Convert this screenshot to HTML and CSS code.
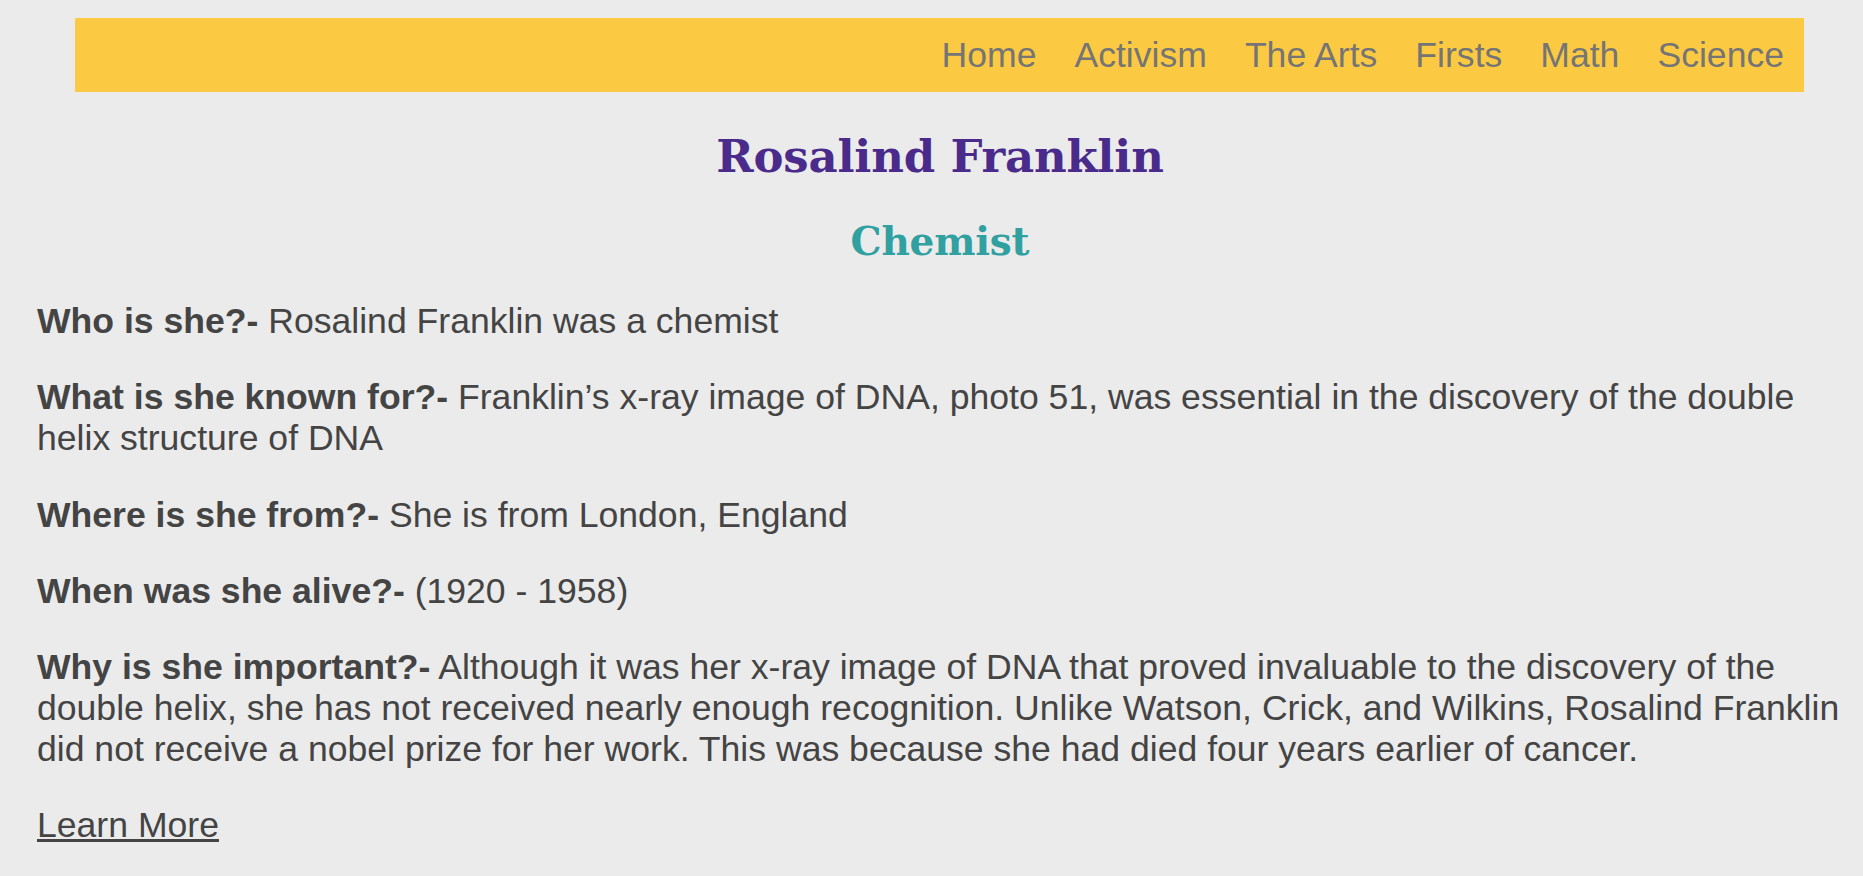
FILE: index.html
```html
<!DOCTYPE html>
<html lang="en">
<head>
<meta charset="utf-8">
<title>Rosalind Franklin</title>
<link rel="stylesheet" href="styles.css">
</head>
<body>
<nav class="topnav">
  <a href="#" class="nav-link">Home</a>
  <a href="#" class="nav-link">Activism</a>
  <a href="#" class="nav-link">The Arts</a>
  <a href="#" class="nav-link">Firsts</a>
  <a href="#" class="nav-link">Math</a>
  <a href="#" class="nav-link">Science</a>
</nav>
<main class="content">
  <h1 class="title">Rosalind Franklin</h1>
  <h2 class="subtitle">Chemist</h2>
  <p class="fact"><strong>Who is she?-</strong> Rosalind Franklin was a chemist</p>
  <p class="fact"><strong>What is she known for?-</strong> Franklin’s x-ray image of DNA, photo 51, was essential in the discovery of the double helix structure of DNA</p>
  <p class="fact"><strong>Where is she from?-</strong> She is from London, England</p>
  <p class="fact"><strong>When was she alive?-</strong> (1920 - 1958)</p>
  <p class="fact"><strong>Why is she important?-</strong> Although it was her x-ray image of DNA that proved invaluable to the discovery of the double helix, she has not received nearly enough recognition. Unlike Watson, Crick, and Wilkins, Rosalind Franklin did not receive a nobel prize for her work. This was because she had died four years earlier of cancer.</p>
  <p class="fact"><a href="#" class="learn-more">Learn More</a></p>
</main>
</body>
</html>
```
FILE: styles.css
```css
html, body {
  margin: 0;
  padding: 0;
  background: #ebebeb;
}

body {
  font-family: "Liberation Sans", Arial, sans-serif;
  color: #444444;
  overflow: hidden;
}

.topnav {
  display: flex;
  justify-content: flex-end;
  align-items: center;
  background: #fcca42;
  margin: 18px 59px 0 75px;
  height: 74px;
}

.nav-link {
  font-size: 35.6px;
  line-height: 41px;
  color: #757575;
  text-decoration: none;
  padding: 0 19px;
}

.nav-link:last-child {
  padding-right: 20px;
}

.content {
  padding: 0 20px 0 37px;
}

.title {
  font-family: "DejaVu Serif", "Liberation Serif", serif;
  font-weight: bold;
  font-size: 45px;
  line-height: 52px;
  color: #4a2b8b;
  text-align: center;
  margin: 39px 0 0;
  letter-spacing: -0.2px;
}

.subtitle {
  font-family: "DejaVu Serif", "Liberation Serif", serif;
  font-weight: bold;
  font-size: 39px;
  line-height: 45px;
  color: #31a0a1;
  text-align: center;
  margin: 36px 0 37px;
  letter-spacing: -0.2px;
}

.fact {
  font-size: 35.6px;
  line-height: 41px;
  margin: 0 0 35.3px;
}

.fact strong {
  font-weight: bold;
}

.learn-more {
  color: #444444;
  text-decoration: underline;
}
```
